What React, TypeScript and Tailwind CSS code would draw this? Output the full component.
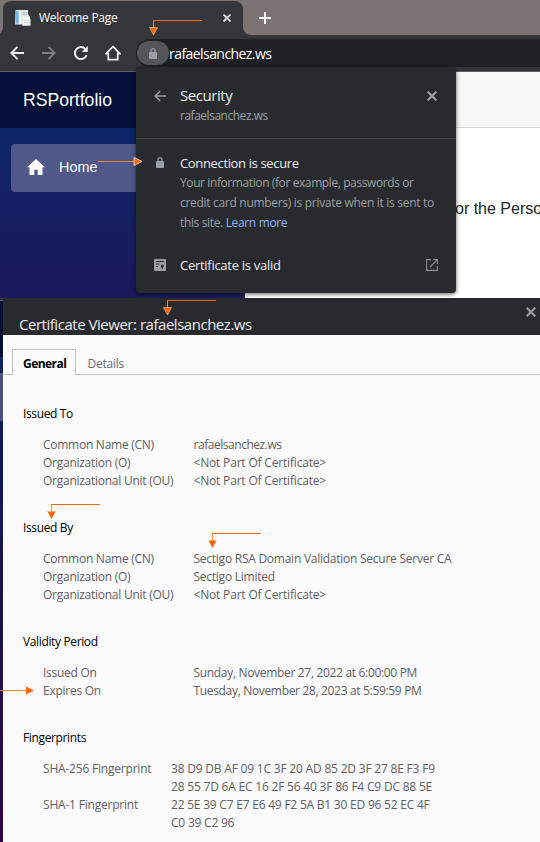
import type { ReactNode } from "react";

const UI = "font-['Open_Sans','Noto_Sans',sans-serif]";

function ElbowArrow({ className, outlined = false }: { className: string; outlined?: boolean }) {
  return (
    <svg className={`absolute ${className}`} width="54" height="17" viewBox="0 0 54 17" fill="none">
      <path d="M4.5 9V1.5" stroke="#ff8a3c" />
      <path d="M4 1.5H53" stroke="#ff6600" />
      <path d="M0.5 8.5H8.5L4.5 16Z" fill="#ff6600" stroke={outlined ? "#ffd9bd" : "none"} strokeWidth="0.5" />
    </svg>
  );
}

function RightArrow({ className, length, outlined = false }: { className: string; length: number; outlined?: boolean }) {
  return (
    <svg className={`absolute ${className}`} width={length} height="9" fill="none">
      <path d={`M0 4.5H${length - 8}`} stroke="#ff8a3c" />
      <path d={`M${length - 8} 0.5V8.5L${length} 4.5Z`} fill="#ff6600" stroke={outlined ? "#ffe3cf" : "none"} strokeWidth="0.8" />
    </svg>
  );
}

function Lock({ className }: { className: string }) {
  return (
    <svg className={className} width="8" height="11" viewBox="0 0 8 11" fill="none">
      <path d="M2 5V2.7a2 2 0 0 1 4 0V5" stroke="#9aa0a6" strokeWidth="1.2" />
      <rect y="4" width="8" height="7" rx="0.8" fill="#9aa0a6" />
    </svg>
  );
}

function Cross({ className, size }: { className: string; size: number }) {
  return (
    <svg className={className} width={size} height={size} viewBox="0 0 10 10" fill="none">
      <path d="M0.7 0.7L9.3 9.3M9.3 0.7L0.7 9.3" stroke="currentColor" strokeWidth="2.1" />
    </svg>
  );
}

function TabStrip() {
  return (
    <div className="flex h-[35px] items-end bg-[#7b7473]">
      <div className="relative ml-[3px] flex h-[34px] w-[240px] items-center rounded-t-lg bg-[#35363a] pl-3">
        <svg className="absolute bottom-0 -left-2" width="8" height="8"><path d="M8 0V8H0A8 8 0 0 0 8 0Z" fill="#35363a" /></svg>
        <svg className="absolute -right-2 bottom-0" width="8" height="8"><path d="M0 0V8H8A8 8 0 0 1 0 0Z" fill="#35363a" /></svg>
        <svg width="16" height="16" viewBox="0 0 16 16">
          <path d="M0.5 0H13V4L15 7V15.5H7V14.5H0Z" fill="#dfe5e9" />
          <path d="M1 1H3.6V13.5H0.6Z" fill="#6db7e3" />
          <path d="M4 1H6V13.5H4Z" fill="#fff" />
          <path d="M6.5 2.5H12M6.5 4.5H12" stroke="#b9c3c9" />
          <path d="M8 6.5H13L15.5 9V15.5H8Z" fill="#f4f4f1" />
          <path d="M9 10.5H14.5M9 12.5H14.5" stroke="#d8dbd7" />
        </svg>
        <span className="ml-2 text-[12px] tracking-[-0.3px] text-white">Welcome Page</span>
        <Cross className="absolute top-[13px] left-[220px] text-[#e8eaed]" size={8} />
      </div>
      <svg className="mb-[11px] ml-[16px]" width="12" height="12"><path d="M6 0V12M0 6H12" stroke="#fff" strokeWidth="2" /></svg>
    </div>
  );
}

function Toolbar() {
  return (
    <div className="flex h-[37px] items-start border-b border-[#5f5f63] bg-[#35363a] pt-1">
      <div className="flex h-7 w-[136px] items-center pl-[10px]">
        <svg width="14" height="14" viewBox="0 0 14 14" fill="none" stroke="#f1f3f4" strokeWidth="1.9"><path d="M14 7H1.5M7.5 .8L1.3 7l6.2 6.2" /></svg>
        <svg className="ml-[18px]" width="14" height="14" viewBox="0 0 14 14" fill="none" stroke="#7f8083" strokeWidth="1.9"><path d="M0 7H12.5M6.5 .8L12.7 7l-6.2 6.2" /></svg>
        <svg className="ml-[18px]" width="14" height="14" viewBox="0 0 14 14" fill="none"><path d="M11.5 3.2A6 6 0 1 0 12.6 9" stroke="#f1f3f4" strokeWidth="2" /><path d="M13.8 0V6H7.8Z" fill="#f1f3f4" /></svg>
        <svg className="ml-[17px]" width="16" height="16" viewBox="0 0 16 16" fill="none" stroke="#f1f3f4" strokeWidth="1.8"><path d="M8 1.5L1.2 8.6H3.3V14.6H12.7V8.6H14.8Z" /></svg>
      </div>
      <div className="flex h-7 flex-1 items-center rounded-l-full bg-[#202124]">
        <div className="ml-px flex h-6 w-8 items-center justify-center rounded-full bg-[#55565a]"><Lock className="" /></div>
        <span className="text-[14px] tracking-[-0.56px] text-white">rafaelsanchez.ws</span>
      </div>
    </div>
  );
}

function Page() {
  return (
    <div className="flex h-[226px] font-['Liberation_Sans',Arial,sans-serif]">
      <div className="w-[245px] shrink-0 bg-linear-to-b from-[#0a2468] from-25% to-[#1b175c]">
        <div className="flex h-14 items-center bg-[#051039] pl-[23px] text-[17.6px] text-white">RSPortfolio</div>
        <div className="mt-4 ml-[11px] flex h-12 w-[218px] items-center rounded-[4px] bg-[#4f5888] pl-4 text-[14.4px] text-white">
          <svg className="-mt-0.5" width="18" height="16" viewBox="0 0 18 16" fill="#fff"><path d="M9 0L18 8.2H15.5V16H10.7V10.8H7.3V16H2.5V8.2H0Z" /></svg>
          <span className="ml-[14px]">Home</span>
        </div>
      </div>
      <div className="min-w-0 flex-1 bg-white">
        <div className="h-14 border-b border-[#d6d5d5] bg-[#f7f7f7]" />
        <div className="mt-[70px] ml-[210px] text-[16px] leading-[22px] whitespace-nowrap text-[#212529]">or the Perso</div>
      </div>
    </div>
  );
}

function SecurityPopup() {
  return (
    <div className="absolute top-[67px] left-[136px] h-[226px] w-80 rounded-[4px] bg-[#292a2d] text-[#e8eaed] shadow-[0_1px_4px_rgba(0,0,0,0.65)]">
      <div className="flex h-[72px] border-b border-[#3f4043] pt-[17px] pl-[18px]">
        <svg className="mt-[6px]" width="12" height="12" viewBox="0 0 12 12" fill="none" stroke="#9aa0a6" strokeWidth="1.5"><path d="M12 6H1.2M6.2 1L1.2 6l5 5" /></svg>
        <div className="ml-[14px] flex-1">
          <div className="text-[15px] leading-[22px] tracking-[-0.45px]">Security</div>
          <div className="mt-px text-[12px] leading-[18px] tracking-[-0.48px] text-[#9aa0a6]">rafaelsanchez.ws</div>
        </div>
        <Cross className="mt-[7px] mr-[19px] text-[#9aa0a6]" size={10} />
      </div>
      <div className="flex pt-[14px] pl-5">
        <Lock className="mt-[4px]" />
        <div className="ml-4 whitespace-nowrap">
          <div className="text-[13px] leading-5 tracking-[-0.35px]">Connection is secure</div>
          <div className="text-[12px] leading-5 tracking-[-0.3px] text-[#9aa0a6]">
            <div className="tracking-[-0.4px]">Your information (for example, passwords or</div>
            <div>credit card numbers) is private when it is sent to</div>
            <div className="tracking-[-0.35px]">this site. <span className="text-[#8ab4f8]">Learn more</span></div>
          </div>
        </div>
      </div>
      <div className="mt-[22px] flex items-center pl-[18px]">
        <svg width="12" height="12" viewBox="0 0 12 12"><rect width="12" height="12" rx="1" fill="#9aa0a6" /><path d="M2 2.5H10M2 5H5.5M2 7.5H4" stroke="#292a2d" /><circle cx="8.3" cy="7" r="1.6" fill="#292a2d" /><path d="M7.6 7h1.4v3l-.7-.5-.7.5z" fill="#292a2d" /></svg>
        <span className="ml-[14px] flex-1 text-[13px] leading-5 tracking-[-0.28px]">Certificate is valid</span>
        <svg className="mr-[18px]" width="12" height="12" viewBox="0 0 12 12" fill="none" stroke="#8b9095" strokeWidth="1.1"><path d="M5 .6H.6V11.4H11.4V7M7.2 .6H11.4V4.8M11.2 .8L4 8" /></svg>
      </div>
    </div>
  );
}

function Section({ title, children }: { title: string; children: ReactNode }) {
  return (
    <section className="mb-[29px]">
      <h2 className="mb-[13px] text-[12px] leading-[18px] tracking-[-0.36px] text-black">{title}</h2>
      {children}
    </section>
  );
}

function Row({ label, value, wide = true, tracking = "tracking-[-0.25px]" }: { label: string; value: ReactNode; wide?: boolean; tracking?: string }) {
  return (
    <div className="flex pl-5 text-[12px] leading-[18px] tracking-[-0.26px] whitespace-nowrap text-[#5f6063]">
      <div className={wide ? "w-[150.5px]" : "w-[128px] tracking-[-0.2px]"}>{label}</div>
      <div className={tracking}>{value}</div>
    </div>
  );
}

function CertificateViewer() {
  const absent = "<Not Part Of Certificate>";
  return (
    <div className="flex h-[544px]">
      <div className="flex w-[3px] flex-col">
        <div className="h-[3px] border-b border-[#5f5f63] bg-[#35363a]" />
        <div className="h-14 bg-[#051039]" />
        <div className="h-4 bg-[#0c2263]" />
        <div className="h-12 bg-[#4a5085]" />
        <div className="flex-1 bg-linear-to-b from-[#0f1b60] via-[#1b1053] to-[#2e0447]" />
      </div>
      <div className="flex-1 bg-[#fbfbfb]">
        <header className="flex h-[37px] justify-between bg-[#292a2d] pt-[9px] pr-1 pl-4 text-[15px] leading-[34px] tracking-[-0.47px] text-[#e8eaed]">
          <span>Certificate Viewer: rafaelsanchez.ws</span>
          <Cross className="text-[#9aa0a6]" size={10} />
        </header>
        <div className="mt-[14px] flex h-[26px] border-b border-[#c4c4c4] pl-[9px] text-[12px]">
          <div className="-mb-px h-[26px] w-16 border border-b-0 border-[#c4c4c4] bg-[#fbfbfb] pl-[10px] leading-[27px] font-bold tracking-[-0.55px] text-black">General</div>
          <div className="pl-[11.5px] leading-[29px] tracking-[-0.25px] text-[#6b6c6f]">Details</div>
        </div>
        <main className="pt-[30px] pl-5">
          <Section title="Issued To">
            <Row label="Common Name (CN)" value="rafaelsanchez.ws" tracking="tracking-[-0.46px]" />
            <Row label="Organization (O)" value={absent} tracking="tracking-[-0.18px]" />
            <Row label="Organizational Unit (OU)" value={absent} tracking="tracking-[-0.18px]" />
          </Section>
          <Section title="Issued By">
            <Row label="Common Name (CN)" value="Sectigo RSA Domain Validation Secure Server CA" />
            <Row label="Organization (O)" value="Sectigo Limited" />
            <Row label="Organizational Unit (OU)" value={absent} tracking="tracking-[-0.18px]" />
          </Section>
          <Section title="Validity Period">
            <Row label="Issued On" value="Sunday, November 27, 2022 at 6:00:00 PM" tracking="tracking-[-0.32px]" />
            <Row label="Expires On" value="Tuesday, November 28, 2023 at 5:59:59 PM" tracking="tracking-[-0.33px]" />
          </Section>
          <Section title="Fingerprints">
            <Row wide={false} tracking="tracking-[-0.2px]" label="SHA-256 Fingerprint" value={<>38 D9 DB AF 09 1C 3F 20 AD 85 2D 3F 27 8E F3 F9<br />28 55 7D 6A EC 16 2F 56 40 3F 86 F4 C9 DC 88 5E</>} />
            <Row wide={false} tracking="tracking-[-0.22px]" label="SHA-1 Fingerprint" value={<>22 5E 39 C7 E7 E6 49 F2 5A B1 30 ED 96 52 EC 4F<br />C0 39 C2 96</>} />
          </Section>
        </main>
      </div>
    </div>
  );
}

export default function App() {
  return (
    <div className={`relative h-[842px] w-[540px] overflow-hidden ${UI}`}>
      <TabStrip />
      <Toolbar />
      <Page />
      <CertificateViewer />
      <SecurityPopup />
      <ElbowArrow outlined className="top-[19px] left-[149px]" />
      <ElbowArrow outlined className="top-[299px] left-[163px]" />
      <ElbowArrow className="top-[503px] left-[47px]" />
      <ElbowArrow className="top-[532px] left-[208px]" />
      <RightArrow outlined className="top-[157px] left-[98px]" length={44} />
      <RightArrow className="top-[686px] left-0" length={34} />
    </div>
  );
}
